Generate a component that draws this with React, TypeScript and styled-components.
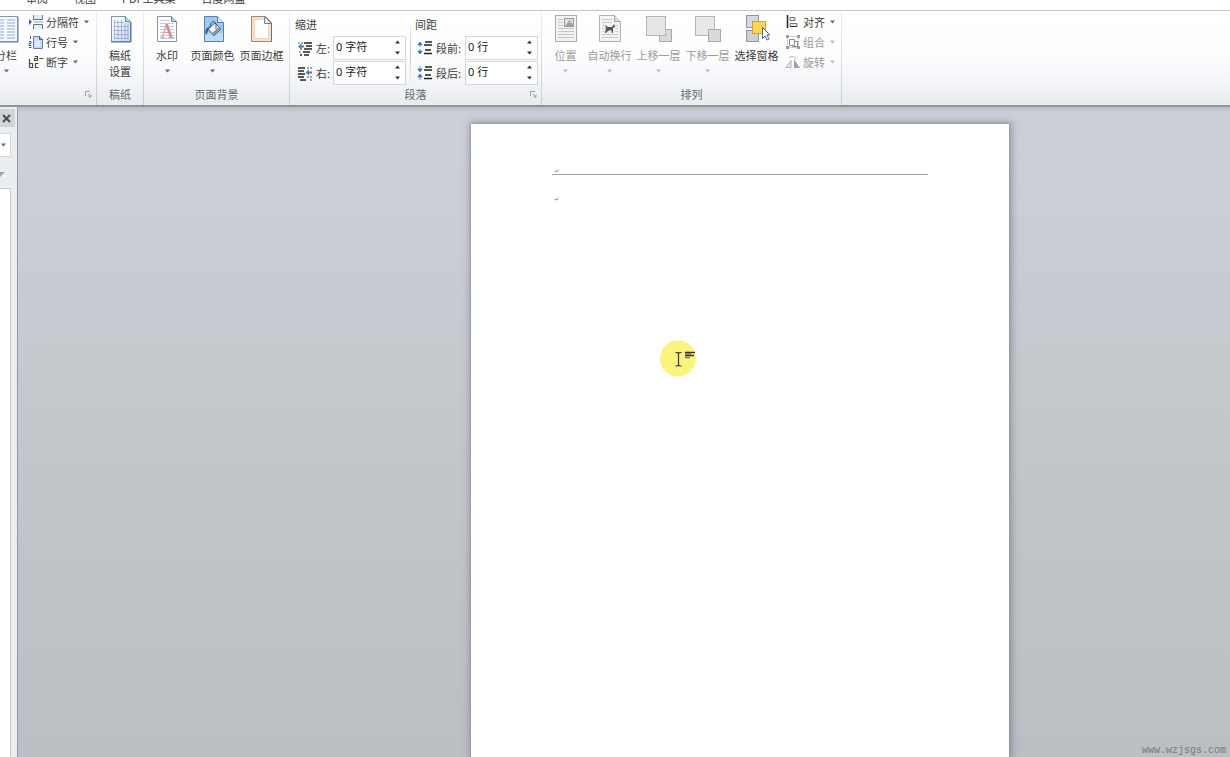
import React from "react";
import styled, { createGlobalStyle } from "styled-components";

const GlobalStyle = createGlobalStyle`
  *, *::before, *::after { box-sizing: border-box; }
  html, body { margin: 0; height: 100%; }
  body, button, input {
    font-family: "Noto Sans CJK SC", "Noto Sans", sans-serif;
    font-size: 11px;
    line-height: 16px;
    color: #3c3c3c;
  }
  svg { display: block; flex: none; }
`;

const Window = styled.div`
  display: flex;
  flex-direction: column;
  height: 100vh;
  overflow: hidden;
`;

const TabStrip = styled.nav`
  display: flex;
  align-items: flex-end;
  gap: 26px;
  height: 10px;
  padding: 0 26px 4px;
  overflow: hidden;
  background: #fff;
`;

const Tab = styled.a`
  flex: none;
  color: #3c3c3c;
  text-decoration: none;
`;

const Ribbon = styled.header`
  display: flex;
  flex: none;
  border-top: 1px solid #c3c7cb;
  border-bottom: 2px solid #8f949b;
  background: linear-gradient(#ffffff 0%, #fdfdfe 50%, #f1f3f6 80%, #e8ecef 100%);
`;

const Group = styled.section<{ $width: number }>`
  display: flex;
  flex-direction: column;
  flex: none;
  width: ${(p) => p.$width}px;
  height: 94px;
  padding-top: 1px;
  overflow: hidden;
  border-right: 1px solid;
  border-image: linear-gradient(#eef0f2, #c6cbd1) 1;
`;

const GroupBody = styled.div<{ $align?: string; $inset?: number }>`
  display: flex;
  flex: 1;
  justify-content: ${(p) => p.$align ?? "flex-start"};
  padding-left: ${(p) => p.$inset ?? 0}px;
`;

const GroupFooter = styled.div`
  display: grid;
  height: 19px;
  align-items: start;
`;

const GroupTitle = styled.h2`
  grid-area: 1 / 1;
  margin: 0;
  font-size: 11px;
  font-weight: 400;
  text-align: center;
  white-space: nowrap;
  color: #63676c;
`;

const PlainButton = styled.button`
  display: flex;
  flex: none;
  align-items: center;
  margin: 0;
  padding: 0;
  border: 0;
  background: none;
  white-space: nowrap;
  &:disabled { color: #9b9b9b; }
`;

const Launcher = styled(PlainButton)`
  grid-area: 1 / 1;
  justify-self: end;
  justify-content: center;
  width: 16px;
  height: 16px;
`;

const BigButton = styled(PlainButton)<{ $width: number }>`
  flex-direction: column;
  width: ${(p) => p.$width}px;
  padding-top: 2px;
`;

const BigIcon = styled.span`
  display: block;
  margin-bottom: 3px;
`;

const ArrowBox = styled.span`
  display: flex;
  align-items: center;
  height: 16px;
`;

const SmallRows = styled.div<{ $width?: number }>`
  display: flex;
  flex-direction: column;
  flex: none;
  width: ${(p) => (p.$width ? `${p.$width}px` : "auto")};
`;

const SmallButton = styled(PlainButton)`
  gap: 2px;
  height: 20px;
  padding-left: 4px;
`;

const ButtonArrow = styled.span`
  padding-left: 3px;
`;

const FieldColumn = styled.fieldset`
  display: flex;
  flex-direction: column;
  flex: none;
  min-width: 0;
  margin: 0;
  padding: 0;
  border: 0;
`;

const FieldHeading = styled.legend`
  padding: 4px 0 3px;
`;

const FieldRow = styled.div`
  display: flex;
  align-items: center;
  height: 25px;
  padding-left: 2px;
`;

const FieldLabel = styled.label<{ $width: number }>`
  width: ${(p) => p.$width}px;
  padding-left: 3px;
  white-space: nowrap;
`;

const Spinner = styled.div`
  display: flex;
  width: 73px;
  height: 24px;
  border: 1px solid #d5d7da;
  background: #fff;
`;

const SpinnerInput = styled.input`
  flex: 1;
  min-width: 0;
  padding: 0 0 2px 2px;
  border: 0;
  outline: 0;
  background: none;
  font-family: "Noto Sans", "Noto Sans CJK SC", sans-serif;
  color: #222;
`;

const SpinnerButtons = styled.div`
  display: flex;
  flex-direction: column;
  width: 15px;
`;

const Step = styled(PlainButton)`
  flex: 1;
  justify-content: center;
`;

const ColumnRule = styled.div`
  flex: none;
  width: 1px;
  height: 56px;
  margin: 14px 4px 0;
  background: linear-gradient(#eceef0, #c4c8cd, #eceef0);
`;

const Workspace = styled.div`
  display: flex;
  flex: 1;
  min-height: 0;
  background: linear-gradient(#b9bdc6 0, #cccfd7 6px, #cbced6 14%, #c4c8cc 48%, #bfc3c7 72%, #bbbfc4 100%);
`;

const TaskPane = styled.aside`
  display: flex;
  flex-direction: column;
  flex: none;
  width: 18px;
  padding: 2px 2px 0 0;
  border-right: 1px solid #8e98a8;
  background: #ebeef1;
`;

const PaneTitle = styled.div`
  display: flex;
  align-items: center;
  height: 18px;
  padding-left: 2px;
  background: #cfd4d8;
`;

const PaneSelect = styled(PlainButton)`
  width: 11px;
  height: 24px;
  margin-top: 6px;
  padding-left: 1px;
  border: 1px solid #d5d9dd;
  border-left: 0;
  background: #fff;
`;

const PaneFilter = styled(PlainButton)`
  height: 31px;
  padding-top: 4px;
`;

const PaneList = styled.div`
  flex: 1;
  width: 11px;
  border: 1px solid #c9ced3;
  border-left: 0;
  border-bottom: 0;
  background: #fff;
`;

const Canvas = styled.main`
  position: relative;
  display: flex;
  flex: 1;
  min-width: 0;
  padding: 17px 0 0 453px;
  overflow: hidden;
`;

const Sheet = styled.article`
  position: relative;
  flex: none;
  width: 538px;
  padding: 44px 81px 0;
  background: #fff;
  box-shadow: 0 0 2px #85898f, 1px 0 7px 2px rgba(95, 101, 110, 0.5);
`;

const PageHeader = styled.div`
  height: 7px;
  padding: 1px 0 0 2px;
  border-bottom: 1px solid #a4a4a4;
`;

const Paragraph = styled.p`
  margin: 0;
  padding: 22px 0 0 2px;
`;

const Pointer = styled.div`
  position: absolute;
  left: 189px;
  top: 216px;
`;

const SiteMark = styled.div`
  position: absolute;
  right: 4px;
  bottom: 0;
  font-family: "Liberation Mono", monospace;
  font-size: 10px;
  line-height: 12px;
  color: #74797e;
`;

const Arrow = ({ up = false, color = "#666" }: { up?: boolean; color?: string }) => (
  <svg width="5" height="4" viewBox="0 0 5 4" aria-hidden="true">
    <path d={up ? "M0 3.5h5L2.5.5z" : "M0 .5h5L2.5 3.5z"} fill={color} />
  </svg>
);

const Art = ({ children }: { children: React.ReactNode }) => (
  <BigIcon>
    <svg width="30" height="30" viewBox="0 0 30 30" aria-hidden="true">{children}</svg>
  </BigIcon>
);

const Mini = ({ children }: { children: React.ReactNode }) => (
  <svg width="16" height="16" viewBox="0 0 16 16" aria-hidden="true">{children}</svg>
);

const ColumnsArt = () => (
  <Art>
    <rect x="1.5" y="2.5" width="25" height="25" fill="#f6faff" stroke="#8198bb" />
    <path d="M2 28h25V3" fill="none" stroke="#6681ab" />
    <path d="M4 6h9M4 9h9M4 12h9M4 15h9M4 18h9M4 21h9M16 6h8M16 9h8M16 12h8M16 15h8M16 18h8M16 21h8M4 24h9M16 24h8" stroke="#8caad4" />
  </Art>
);

const GridPaperArt = () => (
  <Art>
    <defs>
      <linearGradient id="paper-blue" x1="0" y1="0" x2="1" y2="1">
        <stop offset="0.3" stopColor="#f4f8fe" />
        <stop offset="1" stopColor="#bcd3f0" />
      </linearGradient>
    </defs>
    <path d="M6.5 2.5h14l5 5v20h-19z" fill="url(#paper-blue)" stroke="#7f92b2" />
    <path d="M20.5 2.5v5h5" fill="#c7d7ec" stroke="#7188ad" />
    <path d="M9 8.5h10M9 12.5h14M9 16.5h14M9 20.5h14M9 24.5h14M9.5 6v19M13 6v19M16.5 6v19M20 9v16M23 9v16" stroke="#93a6c4" strokeWidth=".8" />
    <path d="M6 28h20V8" fill="none" stroke="#4f6f9f" />
  </Art>
);

const WatermarkArt = () => (
  <Art>
    <path d="M5.5 2.5h14l5 5v20h-19z" fill="#fbfcff" stroke="#8794aa" />
    <path d="M19.5 2.5v5h5" fill="#bfd2ec" stroke="#6983ad" />
    <path d="M8 6.5h9M8 9.5h14M8 12.5h14M8 15.5h14M8 18.5h14M8 21.5h14M8 24.5h14" stroke="#c3cde0" />
    <path d="M8.500 23.5h4M16.500 23.5h6M10.500 23L14.500 10M11.500 18.5h6" fill="none" stroke="#dfa19f" strokeWidth="1.2" />
    <path d="M14.500 10l4.500 13" fill="none" stroke="#d98c8a" strokeWidth="2.600" />
  </Art>
);

const PageColorArt = () => (
  <Art>
    <path d="M6.5 2.5h13l6 6v19h-19z" fill="#9fc8f1" stroke="#577fb5" />
    <path d="M7 19h18v8H7z" fill="#bfdcf7" />
    <path d="M19.5 2.5v6h6" fill="#e6f1fc" stroke="#577fb5" />
    <path d="M10 15l7-6 6 6-7 7z" fill="#f2f5f8" stroke="#4c5664" />
    <path d="M12 14c0-7 5-8 6-4v5" fill="none" stroke="#4c5664" />
    <path d="M16 22l7-7-2-2-8 7z" fill="#8795a6" />
    <path d="M11 13c-4 1-4 5-3 8 2-1 1-4 3-6z" fill="#285fa6" />
  </Art>
);

const PageBorderArt = () => (
  <Art>
    <path d="M4.5 2.5h14l6 6v19h-20z" fill="#f8dfc7" stroke="#ab8765" />
    <path d="M7.500 5.500h10l4 4v15h-14z" fill="#fff" stroke="#ecd6c0" />
    <path d="M17.500 2.500v7h7z" fill="#e3ebf5" stroke="#75849b" />
    <path d="M24.500 9v18.500" stroke="#706f79" />
  </Art>
);

const PositionArt = () => (
  <Art>
    <rect x="4.5" y="1.5" width="21" height="26" fill="#f2f2f3" stroke="#aaabaf" />
    <path d="M7 5.5h5M7 8.5h5M7 11.5h5M7 14.5h16M7 17.5h16M7 20.5h16M7 23.5h16" stroke="#c7c7ca" />
    <rect x="13.5" y="4.5" width="9" height="8" fill="#e3e3e5" stroke="#97989c" />
    <path d="M14 12l4-5 4 3v2z" fill="#a4a4a9" />
    <circle cx="19" cy="7" r="1.5" fill="#bfbfc4" />
  </Art>
);

const WrapArt = () => (
  <Art>
    <path d="M4.5 1.5h15l6 6v20h-21z" fill="#f3f3f4" stroke="#b1b1b5" />
    <path d="M19.5 1.5v6h6" fill="#dedee0" stroke="#a3a3a8" />
    <path d="M7 5.5h10M7 8.5h10M7 11.5h3M20 11.5h3M7 14.5h3M20 14.5h3M7 17.5h3M20 17.5h3M7 20.5h16M7 23.5h16" stroke="#cacace" />
    <path d="M10 11l3 2h4l2-3 1 3-2 1v5h-1l-1-3-3 1-2 2h-1l1-5z" fill="#55565a" />
  </Art>
);

const LayerArt = ({ front = false }: { front?: boolean }) => (
  <Art>
    {front && <rect x="2.5" y="2.5" width="19" height="19" fill="#e8e8e9" stroke="#b5b5b8" />}
    <rect x="15.5" y="15.5" width="12" height="12" fill="#dadadc" stroke="#a9a9ad" />
    {!front && <rect x="2.5" y="2.5" width="19" height="19" fill="#e6e6e7" stroke="#b5b5b8" />}
  </Art>
);

const SelectionArt = () => (
  <Art>
    <rect x="4.5" y="1.5" width="12" height="12" fill="#d7dbe1" stroke="#8f959d" />
    <rect x="4.5" y="16.5" width="12" height="11" fill="#cdd1d7" stroke="#8f959d" />
    <rect x="10.5" y="7.5" width="13" height="12" fill="#fbd758" stroke="#c9a63e" />
    <path d="M20.500 13.500v11l2.500-2.500 2 4 2-1-2-4h3z" fill="#fff" stroke="#476b9f" />
  </Art>
);

const BreaksIcon = () => (
  <Mini>
    <path d="M5.5 1v4.5h9V1M5.5 15v-4.5h9V15" fill="#e5edf8" stroke="#5b7499" />
    <path d="M6 8h9" stroke="#8ca1bf" />
    <path d="M1 5l3 3-3 3z" fill="#2f66bd" />
  </Mini>
);

const LineNumbersIcon = () => (
  <Mini>
    <path d="M5.5 2.5h6l3 3v9h-9z" fill="#c9dbf3" stroke="#6481ac" />
    <path d="M7 7.5h5M7 9.5h5M7 11.5h5" stroke="#fff" />
    <path d="M2.5 2v3M1 7.5h2v2H1v2h2.5M1 13.5h2.5" fill="none" stroke="#3e5e92" />
    <path d="M11.5 2.5v3h3" fill="none" stroke="#385984" />
  </Mini>
);

const HyphenIcon = () => (
  <Mini>
    <path d="M1.500 5v8.500M1.500 9.500h3v4h-3M10.500 9.500h-3v4h3M6.500 2.500h3v4h-3v-2h3" fill="none" stroke="#45484d" strokeWidth="1.200" />
    <path d="M11.500 4.500h4" stroke="#45484d" />
  </Mini>
);

const IndentIcon = ({ right = false }: { right?: boolean }) => (
  <Mini>
    <path
      d={right ? "M1 3h7M1 6h6M1 9h7M1 12h6M3 15h6" : "M7 3h8M9 6h6M7 9h8M6 12h7M3 15h2M7 15h5"}
      stroke="#222"
      strokeWidth="1.5"
    />
    <path d={right ? "M10 3h2M13 3h2M10 12h2M13 12h2M13 15h2" : "M1 3h2M4 3h2M2 12h2M3 9h2"} stroke="#555" />
    <path d={right ? "M8.5 7.5L12 4.5v2h3v2h-3v2z" : "M1 6.5l3.5-3v2H7v2H4.5v2z"} fill="#4f79c5" />
  </Mini>
);

const SpacingIcon = ({ after = false }: { after?: boolean }) => (
  <Mini>
    <path d="M8 2h7M7 5h8M8 10h6M7 13.5h8" stroke="#222" strokeWidth="1.4" />
    <path
      d={after ? "M3 1v5M3 10v5M.8 4L3 7l2.2-3zM.8 12L3 9l2.2 3z" : "M3 2v5M3 9v5M.8 5L3 2l2.2 3zM.8 11L3 14l2.2-3z"}
      fill="#4874c4"
      stroke="#4874c4"
      strokeWidth=".8"
    />
  </Mini>
);

const AlignIcon = () => (
  <Mini>
    <path d="M2.5 1v13" stroke="#222" strokeWidth="1.5" />
    <path d="M5 3.5h5v3H5zM5 9.5h7v3H5z" fill="#e5e8ed" stroke="#72777f" />
    <path d="M5 12.5h7" stroke="#333" />
  </Mini>
);

const GroupIcon = () => (
  <Mini>
    <path d="M2.500 2.500h11v11h-11z" fill="none" stroke="#b5b5b8" strokeDasharray="2 1" />
    <path d="M4.500 5.500h5v6h-5zM9.500 7.500h3v5h-5" fill="none" stroke="#8a8b8f" />
    <path d="M1 1h3v3H1zM12 1h3v3h-3zM1 12h3v3H1zM12 12h3v3h-3z" fill="#9b9ca0" />
  </Mini>
);

const RotateIcon = () => (
  <Mini>
    <path d="M1 13.5l5-7v7z" fill="#ececee" stroke="#b3b3b6" />
    <path d="M9 14V5l6 9z" fill="#a2a3a7" />
    <path d="M4 4c2-2 5-2 7 1" fill="none" stroke="#a7a8ab" />
  </Mini>
);

const LauncherIcon = () => (
  <svg width="7" height="7" viewBox="0 0 7 7" aria-hidden="true">
    <path d="M.5 5V.5H5M3 3l3 3M6 3.5V6H3.5" fill="none" stroke="#9a9ea4" />
  </svg>
);

const ParagraphMark = () => (
  <svg width="5" height="4" viewBox="0 0 5 4" aria-hidden="true">
    <path d="M4 0v2.5H1M2 1.500L1 2.500l1 1" fill="none" stroke="#999" strokeWidth=".8" />
  </svg>
);

type LargeProps = {
  art: React.ReactNode;
  label: string;
  second?: string;
  width?: number;
  arrow?: boolean;
  disabled?: boolean;
};

const Large = ({ art, label, second, width = 49, arrow, disabled }: LargeProps) => (
  <BigButton $width={width} disabled={disabled}>
    {art}
    <span>{label}</span>
    {second && <span>{second}</span>}
    {arrow && <ArrowBox><Arrow color={disabled ? "#bbb" : "#666"} /></ArrowBox>}
  </BigButton>
);

type SmallProps = { icon: React.ReactNode; label: string; disabled?: boolean };

const Small = ({ icon, label, disabled }: SmallProps) => (
  <SmallButton disabled={disabled}>
    {icon}
    {label}
    <ButtonArrow><Arrow color={disabled ? "#bbb" : "#666"} /></ButtonArrow>
  </SmallButton>
);

type NumberFieldProps = { id: string; icon: React.ReactNode; label: string; value: string; labelWidth: number };

const NumberField = ({ id, icon, label, value, labelWidth }: NumberFieldProps) => (
  <FieldRow>
    {icon}
    <FieldLabel htmlFor={id} $width={labelWidth}>{label}</FieldLabel>
    <Spinner>
      <SpinnerInput id={id} defaultValue={value} />
      <SpinnerButtons>
        <Step aria-label={`${label} +`}><Arrow up color="#333" /></Step>
        <Step aria-label={`${label} -`}><Arrow color="#333" /></Step>
      </SpinnerButtons>
    </Spinner>
  </FieldRow>
);

const Footer = ({ title, launcher }: { title?: string; launcher?: boolean }) => (
  <GroupFooter>
    {title && <GroupTitle>{title}</GroupTitle>}
    {launcher && <Launcher aria-label="更多"><LauncherIcon /></Launcher>}
  </GroupFooter>
);

export default function App() {
  return (
    <Window>
      <GlobalStyle />
      <TabStrip>
        {["审阅", "视图", "PDF工具集", "百度网盘"].map((name) => (
          <Tab key={name} href="#">{name}</Tab>
        ))}
      </TabStrip>
      <Ribbon>
        <Group $width={97}>
          <GroupBody $align="flex-end">
            <Large art={<ColumnsArt />} label="分栏" width={36} arrow />
            <SmallRows $width={72}>
              <Small icon={<BreaksIcon />} label="分隔符" />
              <Small icon={<LineNumbersIcon />} label="行号" />
              <Small icon={<HyphenIcon />} label="断字" />
            </SmallRows>
          </GroupBody>
          <Footer launcher />
        </Group>
        <Group $width={47}>
          <GroupBody $align="center">
            <Large art={<GridPaperArt />} label="稿纸" second="设置" width={40} />
          </GroupBody>
          <Footer title="稿纸" />
        </Group>
        <Group $width={146}>
          <GroupBody $inset={2}>
            <Large art={<WatermarkArt />} label="水印" width={42} arrow />
            <Large art={<PageColorArt />} label="页面颜色" arrow />
            <Large art={<PageBorderArt />} label="页面边框" />
          </GroupBody>
          <Footer title="页面背景" />
        </Group>
        <Group $width={252}>
          <GroupBody $inset={5}>
            <FieldColumn>
              <FieldHeading>缩进</FieldHeading>
              <NumberField id="indent-left" icon={<IndentIcon />} label="左:" value="0 字符" labelWidth={20} />
              <NumberField id="indent-right" icon={<IndentIcon right />} label="右:" value="0 字符" labelWidth={20} />
            </FieldColumn>
            <ColumnRule />
            <FieldColumn>
              <FieldHeading>间距</FieldHeading>
              <NumberField id="space-before" icon={<SpacingIcon />} label="段前:" value="0 行" labelWidth={32} />
              <NumberField id="space-after" icon={<SpacingIcon after />} label="段后:" value="0 行" labelWidth={32} />
            </FieldColumn>
          </GroupBody>
          <Footer title="段落" launcher />
        </Group>
        <Group $width={300}>
          <GroupBody $inset={4}>
            <Large art={<PositionArt />} label="位置" width={39} arrow disabled />
            <Large art={<WrapArt />} label="自动换行" arrow disabled />
            <Large art={<LayerArt />} label="上移一层" arrow disabled />
            <Large art={<LayerArt front />} label="下移一层" arrow disabled />
            <Large art={<SelectionArt />} label="选择窗格" />
            <SmallRows>
              <Small icon={<AlignIcon />} label="对齐" />
              <Small icon={<GroupIcon />} label="组合" disabled />
              <Small icon={<RotateIcon />} label="旋转" disabled />
            </SmallRows>
          </GroupBody>
          <Footer title="排列" />
        </Group>
      </Ribbon>
      <Workspace>
        <TaskPane>
          <PaneTitle>
            <PlainButton aria-label="关闭">
              <svg width="9" height="9" viewBox="0 0 9 9" aria-hidden="true">
                <path d="M1 1l7 7M8 1L1 8" stroke="#4a4d51" strokeWidth="2" />
              </svg>
            </PlainButton>
          </PaneTitle>
          <PaneSelect aria-label="搜索选项"><Arrow /></PaneSelect>
          <PaneFilter aria-label="筛选">
            <svg width="5" height="6" viewBox="0 0 5 6" aria-hidden="true">
              <path d="M0 0h5L0 5z" fill="#9fa3a7" />
            </svg>
          </PaneFilter>
          <PaneList />
        </TaskPane>
        <Canvas>
          <Sheet>
            <PageHeader><ParagraphMark /></PageHeader>
            <Paragraph><ParagraphMark /></Paragraph>
            <Pointer>
              <svg width="37" height="37" viewBox="0 0 37 37" aria-hidden="true">
                <circle cx="18" cy="18.5" r="18" fill="#fbf47c" />
                <path d="M15.5 12.5h2l1 1 1-1h2M18.5 13v12M15.5 26h2l1-1 1 1h2" fill="none" stroke="#35352c" strokeWidth="1.2" />
                <path d="M25 12.500h10M25 15.500h9" stroke="#33332f" strokeWidth="1.3" />
                <path d="M25 14h6M25 17.500h5" stroke="#77765f" strokeWidth="1.3" />
              </svg>
            </Pointer>
          </Sheet>
          <SiteMark>www.wzjsgs.com</SiteMark>
        </Canvas>
      </Workspace>
    </Window>
  );
}
